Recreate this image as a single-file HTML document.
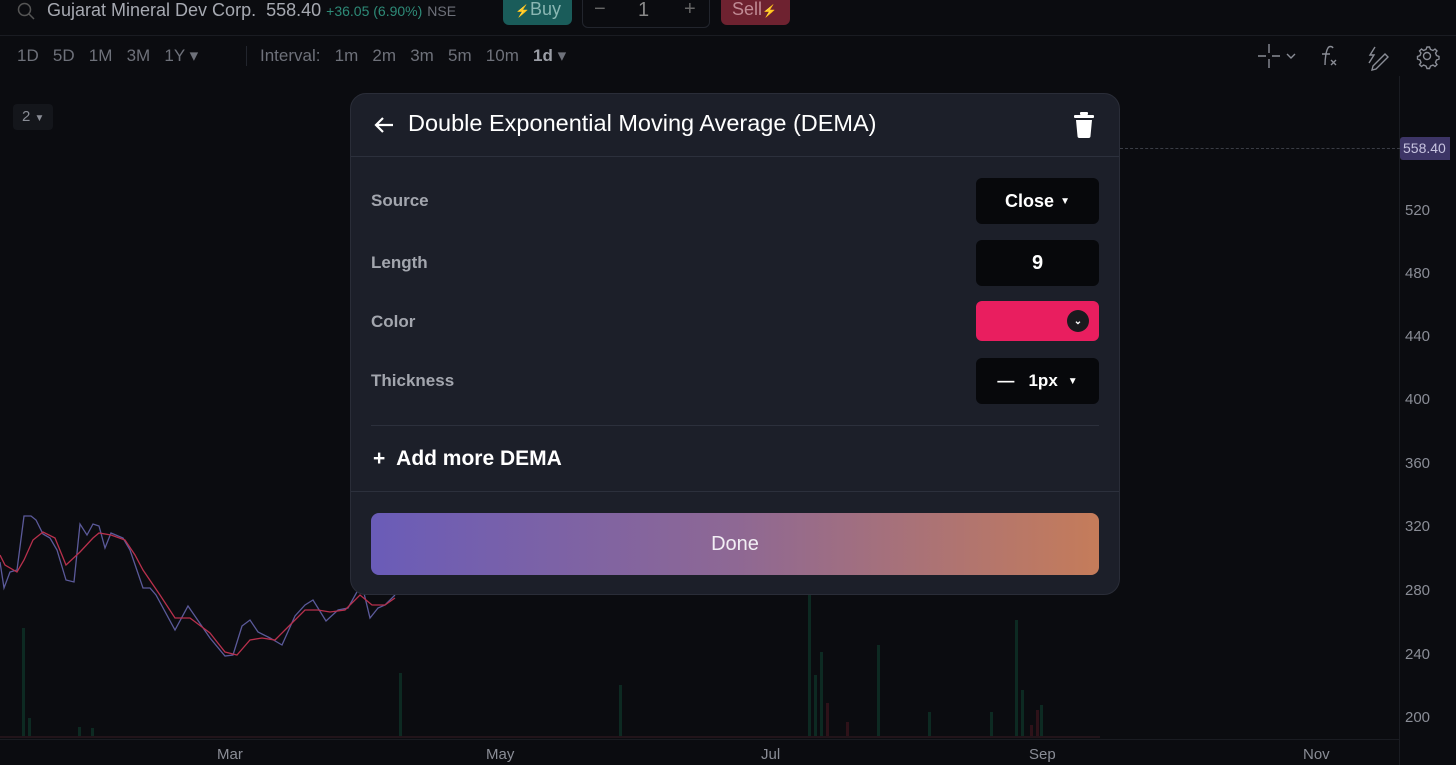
<!DOCTYPE html>
<html><head><meta charset="utf-8"><style>
*{box-sizing:border-box;margin:0;padding:0}
body{width:1456px;height:765px;overflow:hidden;background:#0b0c10;font-family:"Liberation Sans",sans-serif;color:#8a8d96;position:relative}
.a{position:absolute;white-space:nowrap}
.t{font-size:17px;color:#6e717a}
.modal{position:absolute;left:350px;top:93px;width:770px;height:502px;background:#1c1f29;border-radius:16px;border:1px solid #2a2d38}
.lbl{position:absolute;left:20px;font-size:17px;font-weight:bold;color:#a3a6ae}
.box{position:absolute;left:625px;width:123px;height:46px;background:#07080b;border-radius:6px;color:#fff;font-weight:bold;font-size:18px;display:flex;align-items:center;justify-content:center}
.ax{position:absolute;left:1405px;font-size:15px;color:#8a8d96}
.dx{position:absolute;top:746px;font-size:15px;color:#8a8d96}
</style></head><body>
<div class="a" style="left:0;top:35px;width:1456px;height:1px;background:#1a1c22"></div>
<svg class="a" style="left:17px;top:2px" width="18" height="18" viewBox="0 0 18 18"><circle cx="7.5" cy="7.5" r="6" stroke="#555" stroke-width="1.5" fill="none"/><path d="M12 12l5 5" stroke="#555" stroke-width="1.5"/></svg>
<div class="a" style="left:47px;top:0px;font-size:18px;color:#a6a9b1">Gujarat Mineral Dev Corp.&nbsp; 558.40 <span style="font-size:14px;color:#2e8b78">+36.05 (6.90%)</span> <span style="font-size:14px;color:#6e717a">NSE</span></div>
<div class="a" style="left:503px;top:-6px;width:69px;height:31px;background:#1a5c5a;border-radius:6px;font-size:18px;color:#8ab7b3;padding:5px 0 0 12px"><span style="color:#b28a2e;font-size:12px">⚡</span>Buy</div>
<div class="a" style="left:582px;top:-6px;width:128px;height:34px;border:1px solid #22252d;border-radius:6px"></div>
<div class="a" style="left:594px;top:-2px;font-size:20px;color:#666">−</div>
<div class="a" style="left:638px;top:-1px;font-size:20px;color:#888">1</div>
<div class="a" style="left:684px;top:-2px;font-size:20px;color:#666">+</div>
<div class="a" style="left:721px;top:-6px;width:69px;height:31px;background:#6e2230;border-radius:6px;font-size:18px;color:#c08a94;padding:5px 0 0 11px">Sell<span style="color:#b28a2e;font-size:12px">⚡</span></div>
<div class="a t" style="left:17px;top:46px">1D&nbsp;&nbsp; 5D&nbsp;&nbsp; 1M&nbsp;&nbsp; 3M&nbsp;&nbsp; 1Y ▾</div>
<div class="a" style="left:246px;top:46px;width:1px;height:20px;background:#22252d"></div>
<div class="a t" style="left:260px;top:46px">Interval:&nbsp;&nbsp; 1m&nbsp;&nbsp; 2m&nbsp;&nbsp; 3m&nbsp;&nbsp; 5m&nbsp;&nbsp; 10m&nbsp;&nbsp; <b style="color:#9a9da5">1d</b> ▾</div>
<svg class="a" style="left:1256px;top:43px" width="190" height="28" viewBox="0 0 190 28"><g stroke="#8a8d96" stroke-width="1.4" fill="none"><path d="M2 13h8M16 13h8M13 1v9M13 16v9"/><path d="M31 11l4 4 4-4"/><path d="M69 22c0-6 1-14 3-17 1-2 4-2 5 0M66 11h8M75 17l5 5M80 17l-5 5"/><path d="M113 20l5-8-4 0 5-8M117 23l12-12 3 3-12 12-4 1z"/><circle cx="171" cy="13" r="3.5"/><path d="M171 4l2.5 0 1 2.5 2.5 1 2-1.5 2 2-1.5 2 1 2.5 2.5 1v2.5l-2.5 1-1 2.5 1.5 2-2 2-2-1.5-2.5 1-1 2.5h-2.5l-1-2.5-2.5-1-2 1.5-2-2 1.5-2-1-2.5-2.5-1v-2.5l2.5-1 1-2.5-1.5-2 2-2 2 1.5 2.5-1z"/></g></svg>
<div class="a" style="left:13px;top:104px;width:40px;height:26px;background:#14161b;border-radius:4px;font-size:15px;padding:4px 0 0 9px">2 <span style="font-size:10px">▼</span></div>
<div class="a" style="left:1399px;top:76px;width:1px;height:689px;background:#1a1c22"></div>
<div class="a" style="left:0;top:739px;width:1400px;height:1px;background:#1a1c22"></div>
<div class="a" style="left:1120px;top:148px;width:280px;border-top:1px dashed #3a3d45"></div>
<div class="a" style="left:1400px;top:137px;width:50px;height:23px;background:#3d3566;border-radius:3px 0 0 3px;font-size:14px;color:#c8c4e0;padding:3px 0 0 3px">558.40</div>
<div class="ax" style="top:202px">520</div><div class="ax" style="top:265px">480</div><div class="ax" style="top:328px">440</div><div class="ax" style="top:391px">400</div><div class="ax" style="top:455px">360</div><div class="ax" style="top:518px">320</div><div class="ax" style="top:582px">280</div><div class="ax" style="top:646px">240</div><div class="ax" style="top:709px">200</div>
<div class="dx" style="left:217px">Mar</div><div class="dx" style="left:486px">May</div><div class="dx" style="left:761px">Jul</div><div class="dx" style="left:1029px">Sep</div><div class="dx" style="left:1303px">Nov</div>
<svg class="a" style="left:0;top:500px" width="1100" height="240" viewBox="0 0 1100 240">
<polyline fill="none" stroke="#5b5a9a" stroke-width="1.3" points="0,62 4,88 10,72 17,70 24,16 31,16 36,20 43,34 50,38 57,50 66,80 74,82 80,24 87,35 93,24 99,26 105,48 111,33 123,38 130,50 143,88 150,88 156,95 175,130 188,106 210,138 225,156 233,155 242,126 250,120 258,132 270,138 282,145 295,116 305,105 313,100 326,121 338,110 348,108 358,90 362,85 370,118 378,108 385,105 395,95"/>
<polyline fill="none" stroke="#b8304c" stroke-width="1.3" points="0,55 5,65 17,72 24,60 33,40 43,32 55,38 66,65 80,52 93,38 99,33 111,35 125,40 135,55 143,70 160,95 175,118 190,118 210,133 225,152 237,155 250,140 262,138 275,140 290,125 305,110 318,110 330,112 345,110 360,95 372,105 385,105 395,98"/>
<g fill="#0d2a22"><rect x="22" y="128" width="3" height="110"/><rect x="28" y="218" width="3" height="20"/><rect x="78" y="227" width="3" height="11"/><rect x="91" y="228" width="3" height="10"/><rect x="399" y="173" width="3" height="65"/><rect x="619" y="185" width="3" height="53"/><rect x="808" y="95" width="3" height="143"/><rect x="814" y="175" width="3" height="63"/><rect x="820" y="152" width="3" height="86"/><rect x="877" y="145" width="3" height="93"/><rect x="1015" y="120" width="3" height="118"/><rect x="1021" y="190" width="3" height="48"/><rect x="1040" y="205" width="3" height="33"/><rect x="990" y="212" width="3" height="26"/><rect x="928" y="212" width="3" height="26"/></g>
<g fill="#2e1219"><rect x="826" y="203" width="3" height="35"/><rect x="846" y="222" width="3" height="16"/><rect x="1030" y="225" width="3" height="13"/><rect x="1036" y="210" width="3" height="28"/></g>
<rect x="0" y="236" width="1100" height="2" fill="#22141a"/>
</svg>
<div class="modal">
 <svg class="a" style="left:22px;top:21px" width="22" height="20" viewBox="0 0 22 20"><path d="M20 10H3M10 3L3 10l7 7" stroke="#fff" stroke-width="2.2" fill="none"/></svg>
 <div class="a" style="left:57px;top:16px;font-size:23.5px;color:#fff">Double Exponential Moving Average (DEMA)</div>
 <svg class="a" style="left:722px;top:18px" width="22" height="26" viewBox="0 0 22 26"><rect x="7" y="0" width="8" height="3" rx="1" fill="#fff"/><rect x="1" y="3" width="20" height="3" rx="1" fill="#fff"/><path d="M3 8h16l-1.5 16a2 2 0 0 1-2 2h-9a2 2 0 0 1-2-2z" fill="#fff"/></svg>
 <div class="a" style="left:0;top:62px;width:768px;height:1px;background:#2c303c"></div>
 <div class="lbl" style="top:97px">Source</div><div class="box" style="top:84px">Close <span style="font-size:10px;margin-left:6px">▼</span></div>
 <div class="lbl" style="top:159px">Length</div><div class="box" style="top:146px;font-size:20px">9</div>
 <div class="lbl" style="top:218px">Color</div><div class="box" style="top:207px;height:40px;background:#e91e5f;justify-content:flex-end;padding-right:10px"><span style="width:22px;height:22px;border-radius:50%;background:#1a1a1e;display:flex;align-items:center;justify-content:center;font-size:10px">⌄</span></div>
 <div class="lbl" style="top:277px">Thickness</div><div class="box" style="top:264px;font-size:17px">—&nbsp;&nbsp; 1px <span style="font-size:10px;margin-left:10px">▼</span></div>
 <div class="a" style="left:20px;top:331px;width:728px;height:1px;background:#2c303c"></div>
 <div class="a" style="left:22px;top:353px;font-size:21px;font-weight:bold;color:#fff">+&nbsp; Add more DEMA</div>
 <div class="a" style="left:0;top:397px;width:768px;height:1px;background:#2c303c"></div>
 <div class="a" style="left:20px;top:419px;width:728px;height:62px;border-radius:8px;background:linear-gradient(90deg,#6a5cb8,#8e6894 50%,#c57c5a);color:#f2eef4;font-size:20px;display:flex;align-items:center;justify-content:center">Done</div>
</div>
</body></html>
